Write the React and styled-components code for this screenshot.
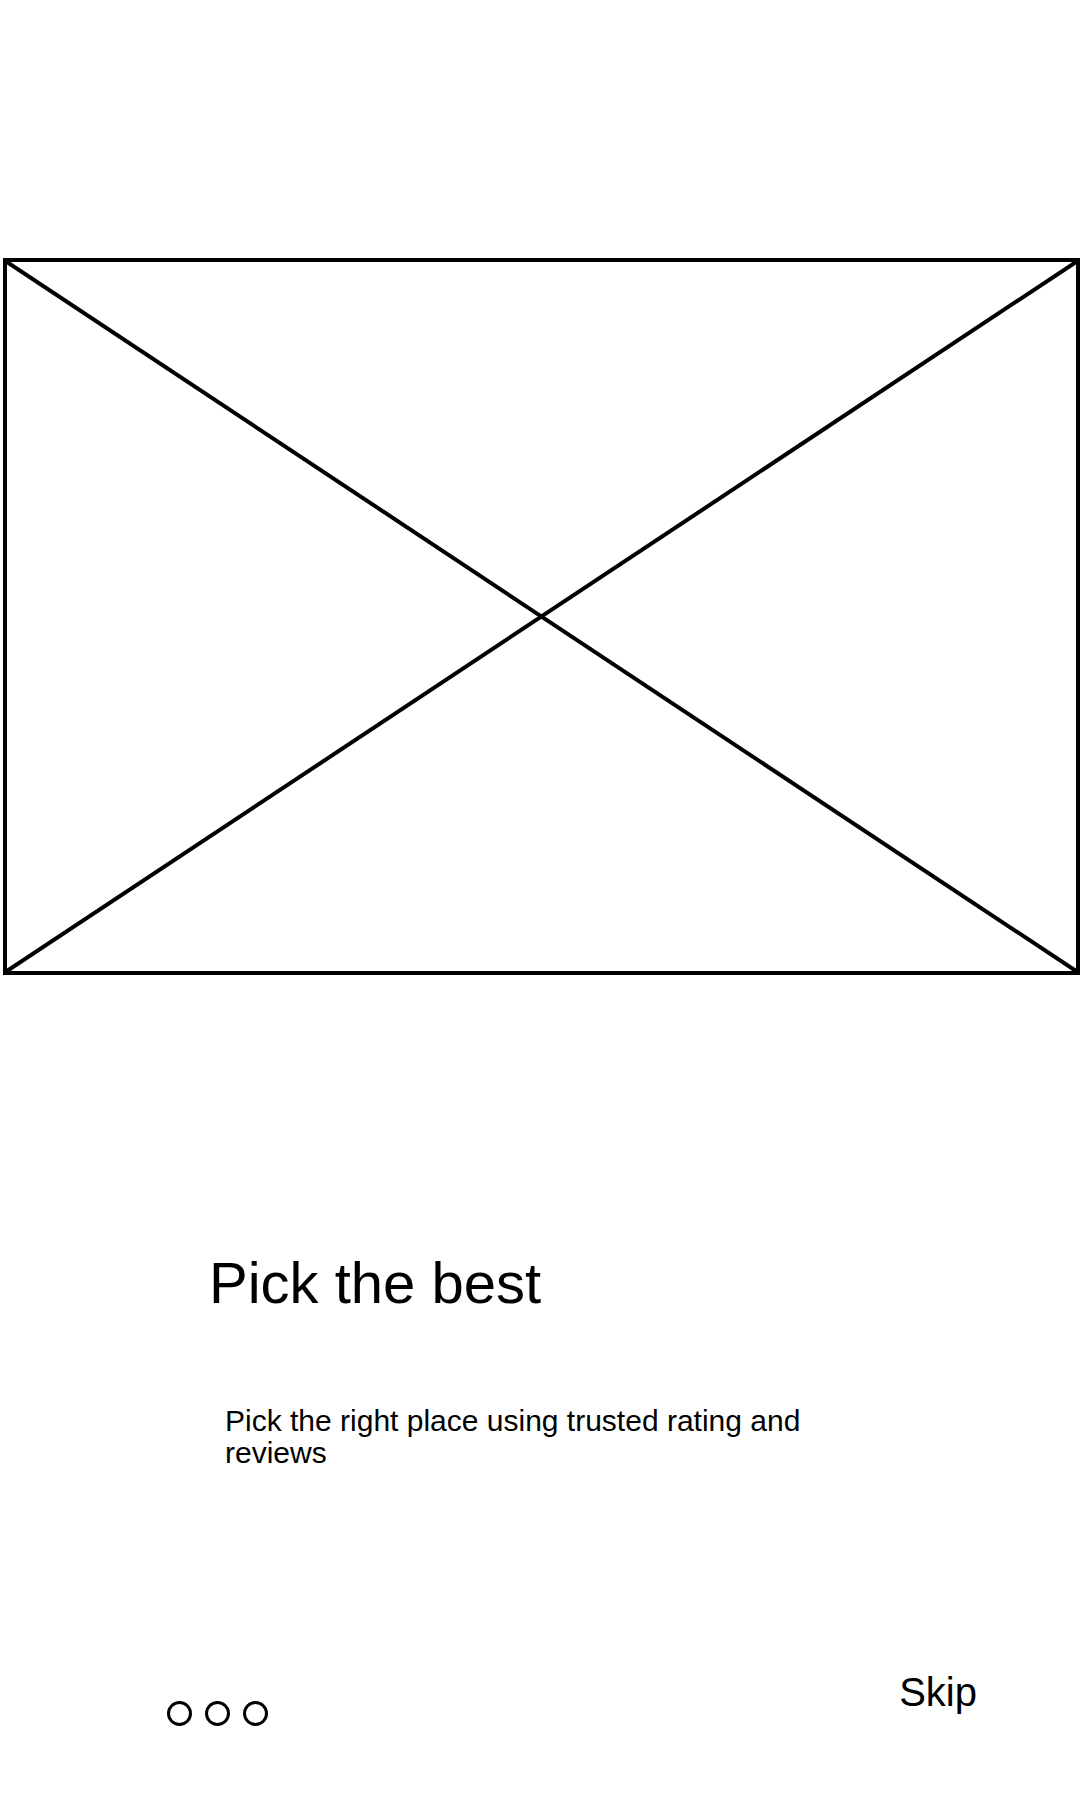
import React from "react";
import styled, { createGlobalStyle } from "styled-components";

const GlobalStyle = createGlobalStyle`
  html, body {
    margin: 0;
    padding: 0;
    background: #fff;
  }
  body {
    font-family: "Liberation Sans", Arial, sans-serif;
    color: #000;
  }
`;

const Page = styled.div`
  width: 1080px;
  min-height: 1800px;
  padding-top: 258px;
  box-sizing: border-box;
  display: flex;
  flex-direction: column;
`;

const ImageBox = styled.div`
  margin-left: 3px;
  width: 1077px;
  height: 717px;
  border: 4px solid #000;
  box-sizing: border-box;
`;

const Cross = styled.svg`
  display: block;
  width: 100%;
  height: 100%;
`;

const Title = styled.h1`
  margin: 279px 0 0 209px;
  font-size: 58px;
  line-height: 58px;
  font-weight: 400;
`;

const Text = styled.p`
  margin: 93px 0 0 225px;
  width: 610px;
  font-size: 30px;
  line-height: 32px;
`;

const Footer = styled.div`
  margin-top: 203px;
  padding: 0 103px 0 167px;
  display: flex;
  align-items: flex-start;
`;

const Dots = styled.div`
  margin-top: 29px;
  display: flex;
  gap: 13px;
`;

const Dot = styled.span`
  width: 25px;
  height: 25px;
  border: 3px solid #000;
  border-radius: 50%;
  box-sizing: border-box;
  background: ${(p) => (p.active ? "#000" : "transparent")};
`;

const Skip = styled.button`
  margin-left: auto;
  padding: 0;
  border: none;
  background: none;
  font-family: "Liberation Sans", Arial, sans-serif;
  font-size: 40px;
  line-height: 40px;
  color: #000;
  cursor: pointer;
`;

export default function App() {
  return (
    <>
      <GlobalStyle />
      <Page>
        <ImageBox>
          <Cross viewBox="0 0 100 100" preserveAspectRatio="none">
            <line x1="0" y1="0" x2="100" y2="100" stroke="#000" strokeWidth="4" vectorEffect="non-scaling-stroke" />
            <line x1="100" y1="0" x2="0" y2="100" stroke="#000" strokeWidth="4" vectorEffect="non-scaling-stroke" />
          </Cross>
        </ImageBox>
        <Title>Pick the best</Title>
        <Text>Pick the right place using trusted rating and reviews</Text>
        <Footer>
          <Dots>
            <Dot />
            <Dot />
            <Dot />
          </Dots>
          <Skip>Skip</Skip>
        </Footer>
      </Page>
    </>
  );
}
